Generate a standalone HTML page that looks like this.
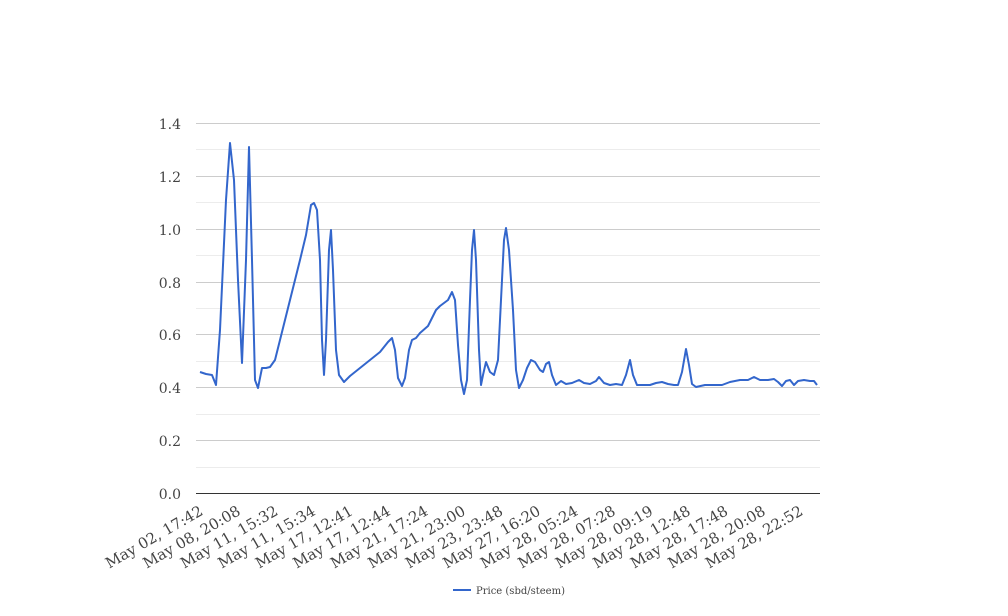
<!DOCTYPE html>
<html><head><meta charset="utf-8"><style>
html,body{margin:0;padding:0;background:#fff;width:1008px;height:616px;overflow:hidden}
svg{display:block}
text{font-family:"DejaVu Serif","Liberation Serif",serif;fill:#444}
</style></head><body>
<svg width="1008" height="616" viewBox="0 0 1008 616" xmlns="http://www.w3.org/2000/svg">
<g stroke="#ececec" stroke-width="1">
<line x1="196" x2="820" y1="149.5" y2="149.5"/><line x1="196" x2="820" y1="202.5" y2="202.5"/><line x1="196" x2="820" y1="255.5" y2="255.5"/><line x1="196" x2="820" y1="308.5" y2="308.5"/><line x1="196" x2="820" y1="361.5" y2="361.5"/><line x1="196" x2="820" y1="414.5" y2="414.5"/><line x1="196" x2="820" y1="467.5" y2="467.5"/>
</g>
<g stroke="#cccccc" stroke-width="1">
<line x1="196" x2="820" y1="123.5" y2="123.5"/><line x1="196" x2="820" y1="176.5" y2="176.5"/><line x1="196" x2="820" y1="229.5" y2="229.5"/><line x1="196" x2="820" y1="282.5" y2="282.5"/><line x1="196" x2="820" y1="334.5" y2="334.5"/><line x1="196" x2="820" y1="387.5" y2="387.5"/><line x1="196" x2="820" y1="440.5" y2="440.5"/>
</g>
<line x1="196" x2="820" y1="493.5" y2="493.5" stroke="#333" stroke-width="1"/>
<g font-size="14" text-anchor="end">
<text x="181" y="129">1.4</text><text x="181" y="182">1.2</text><text x="181" y="235">1.0</text><text x="181" y="288">0.8</text><text x="181" y="340">0.6</text><text x="181" y="393">0.4</text><text x="181" y="446">0.2</text><text x="181" y="499">0.0</text>
</g>
<g font-size="15" text-anchor="end">
<text transform="translate(204,514) rotate(-30)">May 02, 17:42</text>
<text transform="translate(241.5,514) rotate(-30)">May 08, 20:08</text>
<text transform="translate(279,514) rotate(-30)">May 11, 15:32</text>
<text transform="translate(316.5,514) rotate(-30)">May 11, 15:34</text>
<text transform="translate(354,514) rotate(-30)">May 17, 12:41</text>
<text transform="translate(391.5,514) rotate(-30)">May 17, 12:44</text>
<text transform="translate(429,514) rotate(-30)">May 21, 17:24</text>
<text transform="translate(466.5,514) rotate(-30)">May 21, 23:00</text>
<text transform="translate(504,514) rotate(-30)">May 23, 23:48</text>
<text transform="translate(541.5,514) rotate(-30)">May 27, 16:20</text>
<text transform="translate(579,514) rotate(-30)">May 28, 05:24</text>
<text transform="translate(616.5,514) rotate(-30)">May 28, 07:28</text>
<text transform="translate(654,514) rotate(-30)">May 28, 09:19</text>
<text transform="translate(691.5,514) rotate(-30)">May 28, 12:48</text>
<text transform="translate(729,514) rotate(-30)">May 28, 17:48</text>
<text transform="translate(766.5,514) rotate(-30)">May 28, 20:08</text>
<text transform="translate(804,514) rotate(-30)">May 28, 22:52</text>
</g>
<polyline fill="none" stroke="#3366cc" stroke-width="2" stroke-linejoin="round" points="200,372 206,374 212,375 216,385 220,330 226,200 230,143 234,180 238,280 242,363 246,260 249,147 252,260 255,380 258,388 262,368 266,368 270,367 275,360 280,340 285,320 290,300 300,260 306,235 311,205 314,203 317,210 320,260 322,340 324,375 326,340 329,250 331,230 333,270 336,350 339,375 344,382 350,376 360,368 370,360 380,352 388,342 392,338 395,350 398,378 402,386 405,378 409,350 412,340 416,338 420,333 428,326 432,318 436,310 440,306 448,300 452,292 455,300 458,345 461,380 464,394 467,380 470,300 472,250 474,230 476,260 479,350 481,385 483,375 486,362 490,372 494,375 498,360 501,300 504,240 506,228 509,250 513,310 516,370 519,388 523,380 527,368 531,360 535,362 540,370 543,372 546,364 549,362 552,375 556,385 561,381 566,384 572,383 579,380 584,383 590,384 596,381 599,377 604,383 610,385 616,384 622,385 626,375 630,360 633,375 637,385 643,385 650,385 656,383 662,382 668,384 674,385 678,385 682,372 686,349 689,365 692,384 696,387 705,385 722,385 730,382 740,380 748,380 754,377 760,380 768,380 774,379 778,382 782,386 786,381 790,380 794,385 798,381 804,380 810,381 814,381 817,385"/>
<line x1="453" x2="471" y1="590" y2="590" stroke="#3366cc" stroke-width="2"/>
<text x="476" y="594" font-size="10" fill="#222">Price (sbd/steem)</text>
</svg>
</body></html>
